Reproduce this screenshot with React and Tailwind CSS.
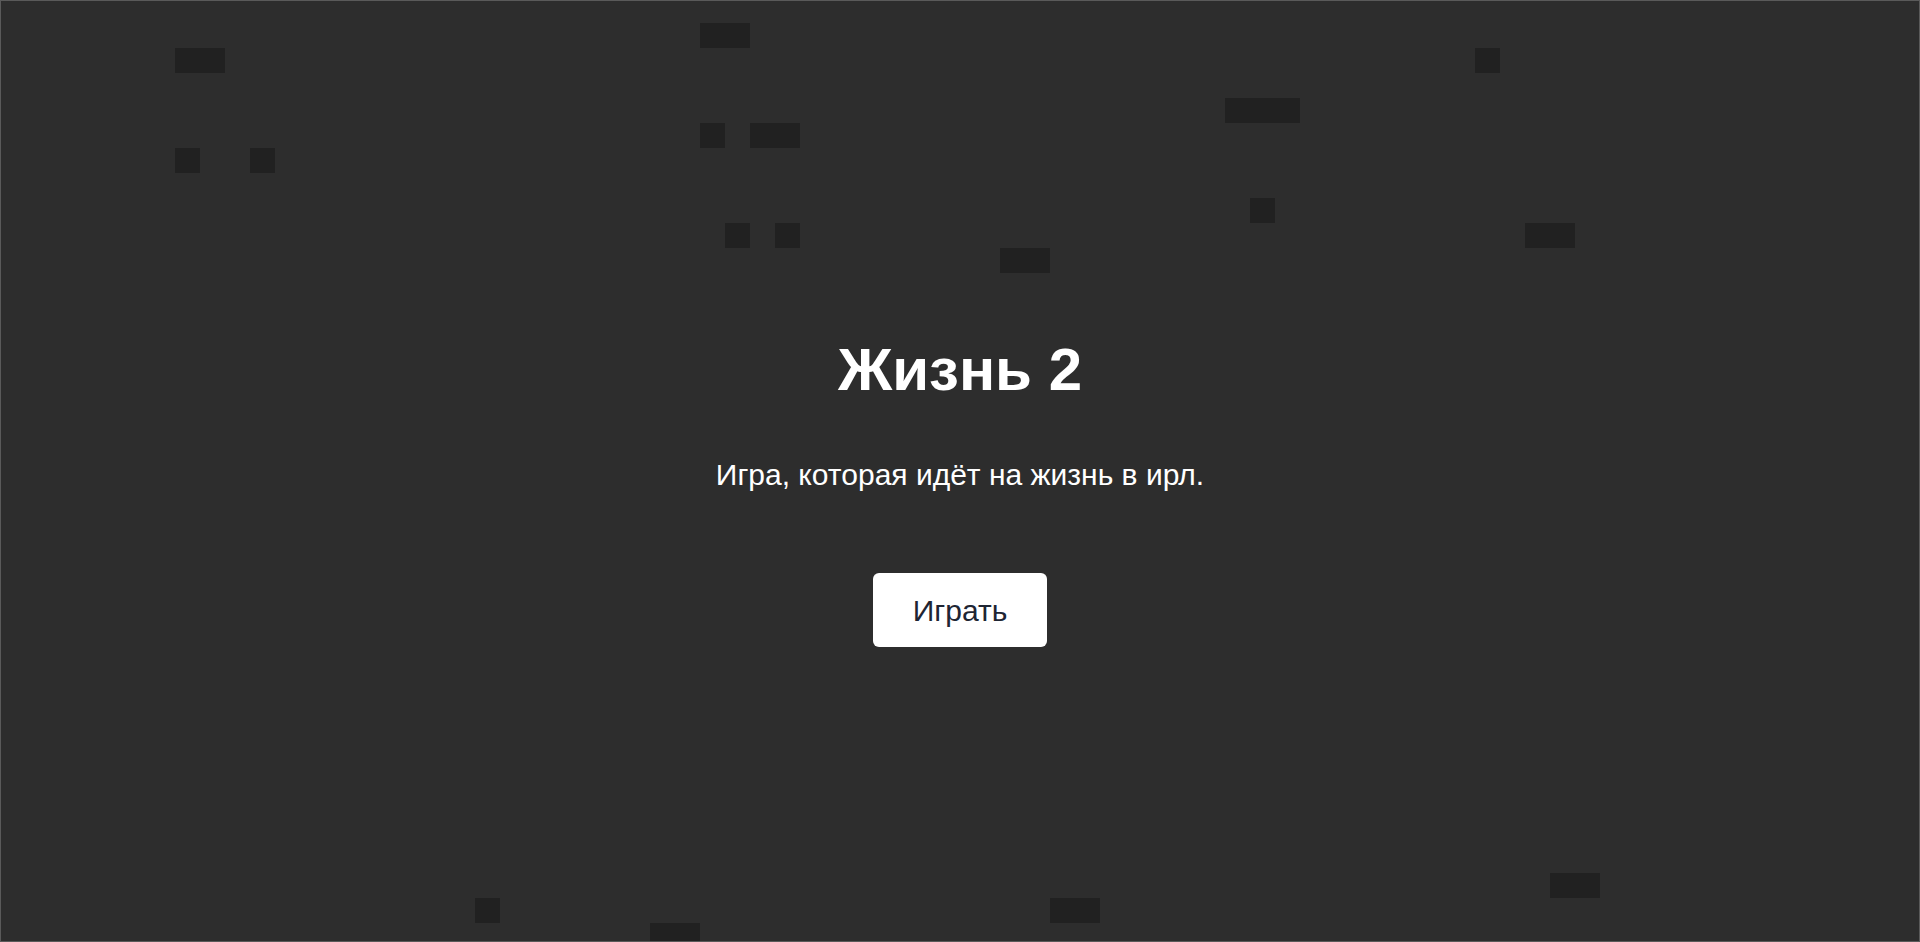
import React from 'react'

// живые клетки фона: x, y, сколько клеток подряд
const cells = [
    [175, 48, 2], [175, 148, 1], [250, 148, 1],
    [700, 23, 2], [700, 123, 1], [750, 123, 2],
    [725, 223, 1], [775, 223, 1], [1000, 248, 2],
    [1225, 98, 3], [1475, 48, 1], [1250, 198, 1],
    [1525, 223, 2], [475, 898, 1], [650, 923, 2],
    [1050, 898, 2], [1550, 873, 2],
]

const LifeBackground = () => (
    <svg className="absolute inset-0 w-full h-full" width="1920" height="942">
        {cells.map(([x, y, n], i) => (
            <rect key={i} x={x} y={y} width={25 * n} height={25} fill="#212121" />
        ))}
    </svg>
)

const App = () => {
    return (
        <div className="relative w-full h-screen overflow-hidden bg-[#2d2d2d] font-['Liberation_Sans',Arial,sans-serif]">
            <LifeBackground />
            <div className="absolute inset-0 border border-[#5a5a5a] pointer-events-none"></div>

            <div className="relative flex flex-col items-center pt-[334px]">
                <h1 className="text-[60px] leading-[72px] font-bold text-white">Жизнь 2</h1>
                <p className="mt-[53px] text-[30px] leading-[32px] text-white">
                    Игра, которая идёт на жизнь в ирл.
                </p>
                <button className="mt-[82px] w-[174px] h-[74px] flex items-center justify-center bg-white rounded-md text-[30px] text-[#1e2533]">
                    Играть
                </button>
            </div>
        </div>
    )
}

export default App
